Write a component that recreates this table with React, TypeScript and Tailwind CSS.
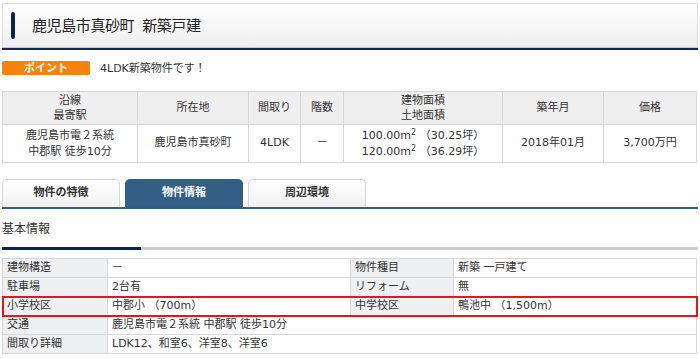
const font = "font-['DejaVu_Sans','Noto_Sans_CJK_JP',sans-serif]";

function Sq() {
  return <sup className="text-[8px]">2</sup>;
}

export default function App() {
  return (
    <div className={`w-[700px] h-[359px] bg-white text-[#333] px-[2px] pt-[3px] ${font} overflow-hidden`}>
      {/* タイトル */}
      <div className="h-[44px] border border-[#dcdcdc] border-b-0 bg-gradient-to-b from-white to-[#efefef] flex items-center">
        <div className="w-[4px] h-[27px] bg-[#0f2350] rounded-full ml-[8px]" />
        <h1 className="ml-[17px] text-[15px] font-['Noto_Sans_CJK_JP',sans-serif] text-[#222] tracking-[-0.4px] flex gap-[8px]">
          <span>鹿児島市真砂町</span>
          <span>新築戸建</span>
        </h1>
      </div>
      <div className="h-[3px] bg-[#17264d] border-t border-[#c8ccd6]" />

      {/* ポイント */}
      <div className="flex items-center mt-[11px] h-[14px]">
        <span className="w-[88px] h-[14px] bg-[#f7830c] rounded-[2px] text-white text-[11px] font-bold flex items-center justify-center leading-none">
          ポイント
        </span>
        <span className="ml-[10px] text-[11px] leading-none">4LDK新築物件です！</span>
      </div>

      {/* 概要テーブル */}
      <table className="mt-[16px] w-[695px] border-collapse text-[11px] text-center table-fixed">
        <colgroup>
          <col className="w-[135px]" />
          <col className="w-[111px]" />
          <col className="w-[52px]" />
          <col className="w-[43px]" />
          <col className="w-[159px]" />
          <col className="w-[101px]" />
          <col />
        </colgroup>
        <thead>
          <tr className="bg-[#efefef] h-[33px]">
            <th className="font-normal border border-[#d6d6d6] leading-[15px]">沿線<br />最寄駅</th>
            <th className="font-normal border border-[#d6d6d6]">所在地</th>
            <th className="font-normal border border-[#d6d6d6]">間取り</th>
            <th className="font-normal border border-[#d6d6d6]">階数</th>
            <th className="font-normal border border-[#d6d6d6] leading-[15px]">建物面積<br />土地面積</th>
            <th className="font-normal border border-[#d6d6d6]">築年月</th>
            <th className="font-normal border border-[#d6d6d6]">価格</th>
          </tr>
        </thead>
        <tbody>
          <tr className="h-[38px]">
            <td className="border border-[#d6d6d6] leading-[16px]">鹿児島市電２系統<br />中郡駅 徒歩10分</td>
            <td className="border border-[#d6d6d6]">鹿児島市真砂町</td>
            <td className="border border-[#d6d6d6]">4LDK</td>
            <td className="border border-[#d6d6d6]">－</td>
            <td className="border border-[#d6d6d6] leading-[16px]">
              100.00m<Sq /> （30.25坪）<br />120.00m<Sq /> （36.29坪）
            </td>
            <td className="border border-[#d6d6d6]">2018年01月</td>
            <td className="border border-[#d6d6d6]">3,700万円</td>
          </tr>
        </tbody>
      </table>

      {/* タブ */}
      <div className="mt-[16px] flex gap-[5px] border-b-2 border-[#2f5d87] h-[30px] items-end">
        <div className="w-[118px] h-[28px] border border-b-0 border-[#d6d6d6] rounded-t-[5px] bg-gradient-to-b from-white to-[#f1f1f1] flex items-center justify-center text-[11px] font-bold">
          物件の特徴
        </div>
        <div className="w-[118px] h-[28px] rounded-t-[5px] bg-[#335f87] text-white flex items-center justify-center text-[11px] font-bold">
          物件情報
        </div>
        <div className="w-[118px] h-[28px] border border-b-0 border-[#d6d6d6] rounded-t-[5px] bg-gradient-to-b from-white to-[#f1f1f1] flex items-center justify-center text-[11px] font-bold">
          周辺環境
        </div>
      </div>

      {/* 基本情報 */}
      <div className="mt-[12px] text-[12px] leading-[16px]">基本情報</div>
      <div className="mt-[10px] flex h-[3px]">
        <div className="w-[139px] bg-[#0f2350]" />
        <div className="flex-1 bg-[#cccccc]" />
      </div>

      <table className="mt-[8px] w-[695px] border-collapse text-[11px] text-left table-fixed">
        <colgroup>
          <col className="w-[105px]" />
          <col className="w-[243px]" />
          <col className="w-[103px]" />
          <col />
        </colgroup>
        <tbody>
          <tr className="h-[19px]">
            <td className="bg-[#eef0f2] border border-[#d6d6d6] px-[4px]">建物構造</td>
            <td className="border border-[#d6d6d6] px-[4px]">－</td>
            <td className="bg-[#eef0f2] border border-[#d6d6d6] px-[4px]">物件種目</td>
            <td className="border border-[#d6d6d6] px-[4px]">新築 一戸建て</td>
          </tr>
          <tr className="h-[19px]">
            <td className="bg-[#eef0f2] border border-[#d6d6d6] px-[4px]">駐車場</td>
            <td className="border border-[#d6d6d6] px-[4px]">2台有</td>
            <td className="bg-[#eef0f2] border border-[#d6d6d6] px-[4px]">リフォーム</td>
            <td className="border border-[#d6d6d6] px-[4px]">無</td>
          </tr>
          <tr className="h-[19px] outline-2 outline-[#e8141a] -outline-offset-1">
            <td className="bg-[#eef0f2] border border-[#d6d6d6] px-[4px]">小学校区</td>
            <td className="border border-[#d6d6d6] px-[4px]">中郡小 （700m）</td>
            <td className="bg-[#eef0f2] border border-[#d6d6d6] px-[4px]">中学校区</td>
            <td className="border border-[#d6d6d6] px-[4px]">鴨池中 （1,500m）</td>
          </tr>
          <tr className="h-[19px]">
            <td className="bg-[#eef0f2] border border-[#d6d6d6] px-[4px]">交通</td>
            <td colSpan={3} className="border border-[#d6d6d6] px-[4px]">鹿児島市電２系統 中郡駅 徒歩10分</td>
          </tr>
          <tr className="h-[19px]">
            <td className="bg-[#eef0f2] border border-[#d6d6d6] px-[4px]">間取り詳細</td>
            <td colSpan={3} className="border border-[#d6d6d6] px-[4px]">LDK12、和室6、洋室8、洋室6</td>
          </tr>
        </tbody>
      </table>
    </div>
  );
}
